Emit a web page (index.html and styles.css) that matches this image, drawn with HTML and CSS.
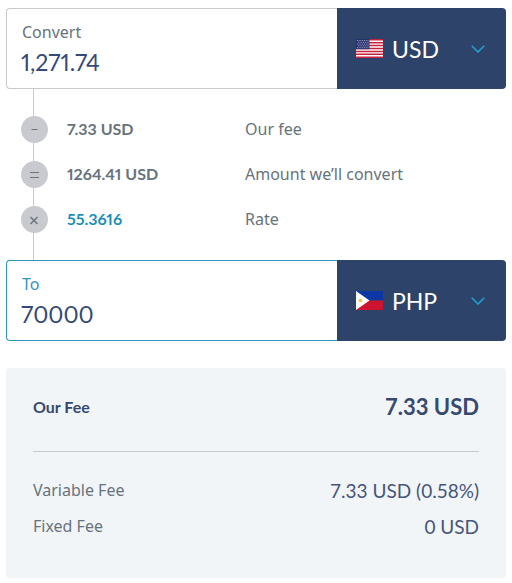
FILE: index.html
```html
<!DOCTYPE html>
<html lang="en">
<head>
<meta charset="utf-8">
<meta name="viewport" content="width=device-width, initial-scale=1">
<title>Currency converter</title>
<link rel="stylesheet" href="styles.css">
</head>
<body>
<main class="converter">
  <form>
    <div class="field">
      <div class="amount">
        <label for="from-amount">Convert</label>
        <input id="from-amount" type="text" inputmode="decimal" value="1,271.74">
      </div>
      <div class="currency">
        <svg class="flag" viewBox="0 0 27 19" aria-hidden="true">
          <path fill="#fff" d="M0 0h27v19H0z"/>
          <path stroke="#c8203f" stroke-width="1.46" d="M0 .73h27M0 3.65h27M0 6.58h27M0 9.5h27M0 12.42h27M0 15.35h27M0 18.27h27"/>
          <path fill="#26306d" d="M0 0h13.500v10.230H0z"/>
          <path stroke="#c3cae0" stroke-width=".9" stroke-dasharray="1 1.300" d="M1.200 1.500h12M2.300 3.300h10.500M1.200 5.100h12M2.300 6.900h10.500M1.200 8.700h12"/>
        </svg>
        <select aria-label="Currency to convert from"><option>USD</option><option>PHP</option></select>
        <svg class="chevron" viewBox="0 0 14 8" aria-hidden="true"><path d="M.7.7 7 7 13.300.7"/></svg>
      </div>
    </div>
    <ul class="steps">
      <li>
        <svg class="sign" viewBox="0 0 27 27" aria-hidden="true"><circle cx="13.500" cy="13.500" r="13.500"/><path d="M10.500 13.500h6"/></svg>
        <strong>7.33 USD</strong><span>Our fee</span>
      </li>
      <li>
        <svg class="sign" viewBox="0 0 27 27" aria-hidden="true"><circle cx="13.500" cy="13.500" r="13.500"/><path d="M9 11.500h9M9 16.500h9"/></svg>
        <strong>1264.41 USD</strong><span>Amount we’ll convert</span>
      </li>
      <li>
        <svg class="sign" viewBox="0 0 27 27" aria-hidden="true"><circle cx="13.500" cy="13.500" r="13.500"/><path stroke-width="1.500" d="m9.500 11 7 7m0-7-7 7"/></svg>
        <strong class="rate">55.3616</strong><span>Rate</span>
      </li>
    </ul>
    <div class="field active">
      <div class="amount">
        <label for="to-amount">To</label>
        <input id="to-amount" type="text" inputmode="decimal" value="70000">
      </div>
      <div class="currency">
        <svg class="flag" viewBox="0 0 27 19" aria-hidden="true">
          <path fill="#0d37a4" d="M0 0h27v9.500H0z"/>
          <path fill="#cc1430" d="M0 9.500h27V19H0z"/>
          <path fill="#fff" d="m0 0 13.500 9.500L0 19z"/>
          <circle cx="4.500" cy="9.500" r="1.800" fill="#f5c63c"/>
          <path fill="#f5d98a" d="M.5 1.500h1v1h-1zM.5 16.500h1v1h-1zM10.500 9h1v1h-1z"/>
        </svg>
        <select aria-label="Currency to convert to"><option>PHP</option><option>USD</option></select>
        <svg class="chevron" viewBox="0 0 14 8" aria-hidden="true"><path d="M.7.7 7 7 13.300.7"/></svg>
      </div>
    </div>
  </form>
  <section class="summary">
    <div class="total"><h2>Our Fee</h2><strong>7.33 USD</strong></div>
    <dl>
      <div><dt>Variable Fee</dt><dd>7.33 USD (0.58%)</dd></div>
      <div><dt>Fixed Fee</dt><dd>0 USD</dd></div>
    </dl>
  </section>
</main>
</body>
</html>
```
FILE: styles.css
```css
* { box-sizing: border-box; }

body {
  margin: 0;
  background: #fff;
  color: #67737c;
  font: 16px/24px "Noto Sans", "Open Sans", sans-serif;
}

.converter { padding: 8px 6px 5px; }

.field {
  display: grid;
  grid-template-columns: 331fr 169fr;
}

.amount {
  display: flex;
  flex-direction: column;
  padding: 11px 14px 8px;
  border: 1px solid #c7c9cc;
  border-right: 0;
  border-radius: 4px 0 0 4px;
}

.amount label { line-height: 24px; padding-left: 1px; }

.amount input {
  width: 100%;
  height: 36px;
  padding: 0;
  border: 0;
  outline: 0;
  background: transparent;
  color: #354a75;
  font: 23px/36px Lato, sans-serif;
  font-variant-numeric: proportional-nums;
}

.active .amount { border-color: #2a96bb; }
.active label { color: #2f97bb; }

.currency {
  display: grid;
  grid-template-columns: 27px 1fr 14px;
  align-items: center;
  padding: 0 21px 0 19px;
  border-radius: 0 4px 4px 0;
  background: #2e4369;
}

.flag, .chevron {
  grid-row: 1;
  z-index: 1;
  width: 100%;
  pointer-events: none;
}

.flag { grid-column: 1; }
.chevron { grid-column: 3; fill: none; stroke: #1ba5d3; stroke-width: 1.5; }

.currency select {
  grid-row: 1;
  grid-column: 1 / -1;
  align-self: stretch;
  padding: 0 0 0 36px;
  border: 0;
  outline: 0;
  appearance: none;
  background: transparent;
  color: #fff;
  font: 23px/32px Lato, sans-serif;
}

.steps {
  margin: 0;
  padding: 18px 0 18px 15px;
  list-style: none;
  background: linear-gradient(#c7c9cc, #c7c9cc) 27px 0 / 1px 100% no-repeat;
}

.steps li {
  display: grid;
  grid-template-columns: 27px 159px 1fr;
  column-gap: 19px;
  align-items: center;
  height: 45px;
}

.sign { width: 27px; fill: #c8cacf; stroke: #6b7580; }
.sign circle { stroke: none; }

.steps strong, .steps span { padding-bottom: 2px; }

.steps strong {
  font: bold 16px/24px Lato, sans-serif;
  font-variant-numeric: proportional-nums;
}

.steps .rate { color: #1d8fb5; }

.summary {
  margin-top: 27px;
  padding: 27px 27px 33px;
  border-radius: 3px;
  background: #f2f5f8;
}

.total, .summary dl div {
  display: flex;
  align-items: center;
  justify-content: space-between;
}

.total {
  padding-bottom: 32px;
  border-bottom: 1px solid #c7cbd0;
  color: #37496f;
}

.total h2 { margin: 0; font: bold 16px/24px Lato, sans-serif; }
.total strong { font: bold 22px/24px Lato, sans-serif; }

.summary dl { margin: 21px 0 0; }
.summary dl div { height: 36px; }
.summary dt { padding-bottom: 2px; }
.summary dd { margin: 0; color: #46557b; font: 19px/24px Lato, sans-serif; }
```
